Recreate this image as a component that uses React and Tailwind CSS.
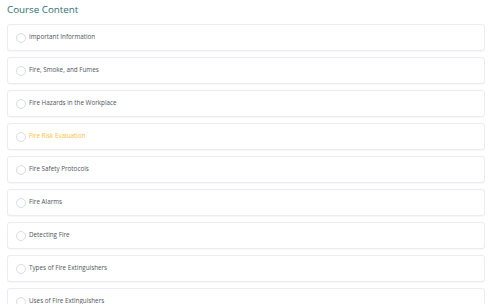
import React from 'react';

const lessons = [
    { title: 'Important Information' },
    { title: 'Fire, Smoke, and Fumes' },
    { title: 'Fire Hazards in the Workplace' },
    { title: 'Fire Risk Evaluation', active: true },
    { title: 'Fire Safety Protocols' },
    { title: 'Fire Alarms' },
    { title: 'Detecting Fire' },
    { title: 'Types of Fire Extinguishers' },
    { title: 'Uses of Fire Extinguishers' },
];

const LessonRow = ({ title, active }) => (
    <div className="flex h-[27px] shrink-0 items-center rounded-[3px] border border-[#ebebf3] bg-white pl-[8px] shadow-[0_1px_1px_rgba(0,0,0,0.03)]">
        <span className="mt-[1px] h-[10px] w-[10px] shrink-0 rounded-full border-[1.5px] border-[#d8dce6]" />
        <span
            className={`ml-[3px] -mt-[2px] text-[6.3px] leading-[10px] ${
                active ? 'text-[#fbbf3c]' : 'text-[#50555c]'
            }`}
        >
            {title}
        </span>
    </div>
);

export default function App() {
    return (
        <div
            className="h-[304px] w-[500px] overflow-hidden bg-white pl-[7px] pr-[15px] pt-[3px]"
            style={{ fontFamily: '"Open Sans", "Liberation Sans", sans-serif' }}
        >
            <h2 className="text-[9.8px] leading-[14px] font-medium text-[#2e6e72]">Course Content</h2>
            <div className="mt-[7px] flex flex-col gap-[6px]">
                {lessons.map((lesson) => (
                    <LessonRow key={lesson.title} {...lesson} />
                ))}
            </div>
        </div>
    );
}
